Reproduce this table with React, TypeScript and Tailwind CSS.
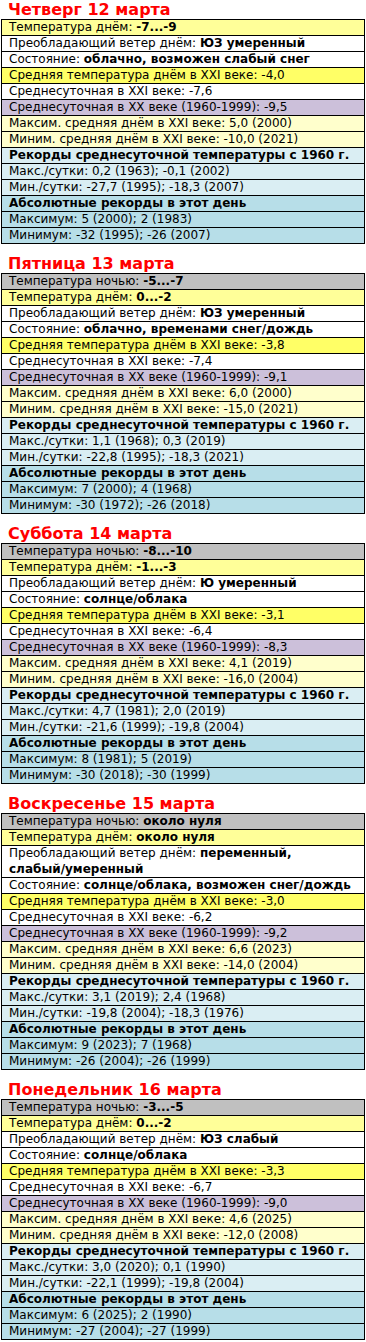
import React from "react";

type Day = {
  title: string;
  night?: string;
  day: string;
  wind: string;
  windWrap?: [string, string];
  state: string;
  avg: string;
  sut21: string;
  sut20: string;
  max: string;
  min: string;
  maxS: string;
  minS: string;
  absMax: string;
  absMin: string;
};

const days: Day[] = [
  {
    title: "Четверг 12 марта",
    day: "-7...-9",
    wind: "ЮЗ умеренный",
    state: "облачно, возможен слабый снег",
    avg: "-4,0",
    sut21: "-7,6",
    sut20: "-9,5",
    max: "5,0 (2000)",
    min: "-10,0 (2021)",
    maxS: "0,2 (1963); -0,1 (2002)",
    minS: "-27,7 (1995); -18,3 (2007)",
    absMax: "5 (2000); 2 (1983)",
    absMin: "-32 (1995); -26 (2007)",
  },
  {
    title: "Пятница 13 марта",
    night: "-5...-7",
    day: "0...-2",
    wind: "ЮЗ умеренный",
    state: "облачно, временами снег/дождь",
    avg: "-3,8",
    sut21: "-7,4",
    sut20: "-9,1",
    max: "6,0 (2000)",
    min: "-15,0 (2021)",
    maxS: "1,1 (1968); 0,3 (2019)",
    minS: "-22,8 (1995); -18,3 (2021)",
    absMax: "7 (2000); 4 (1968)",
    absMin: "-30 (1972); -26 (2018)",
  },
  {
    title: "Суббота 14 марта",
    night: "-8...-10",
    day: "-1...-3",
    wind: "Ю умеренный",
    state: "солнце/облака",
    avg: "-3,1",
    sut21: "-6,4",
    sut20: "-8,3",
    max: "4,1 (2019)",
    min: "-16,0 (2004)",
    maxS: "4,7 (1981); 2,0 (2019)",
    minS: "-21,6 (1999); -19,8 (2004)",
    absMax: "8 (1981); 5 (2019)",
    absMin: "-30 (2018); -30 (1999)",
  },
  {
    title: "Воскресенье 15 марта",
    night: "около нуля",
    day: "около нуля",
    wind: "",
    windWrap: ["переменный,", "слабый/умеренный"],
    state: "солнце/облака, возможен снег/дождь",
    avg: "-3,0",
    sut21: "-6,2",
    sut20: "-9,2",
    max: "6,6 (2023)",
    min: "-14,0 (2004)",
    maxS: "3,1 (2019); 2,4 (1968)",
    minS: "-19,8 (2004); -18,3 (1976)",
    absMax: "9 (2023); 7 (1968)",
    absMin: "-26 (2004); -26 (1999)",
  },
  {
    title: "Понедельник 16 марта",
    night: "-3...-5",
    day: "0...-2",
    wind: "ЮЗ слабый",
    state: "солнце/облака",
    avg: "-3,3",
    sut21: "-6,7",
    sut20: "-9,0",
    max: "4,6 (2025)",
    min: "-12,0 (2008)",
    maxS: "3,0 (2020); 0,1 (1990)",
    minS: "-22,1 (1999); -19,8 (2004)",
    absMax: "6 (2025); 2 (1990)",
    absMin: "-27 (2004); -27 (1999)",
  },
];

function Cell({
  bg,
  children,
  first,
  tall,
}: {
  bg: string;
  children: React.ReactNode;
  first?: boolean;
  tall?: boolean;
}) {
  return (
    <div
      className={
        bg +
        " pl-[7px] whitespace-nowrap overflow-hidden " +
        (tall ? "leading-[15.5px]" : "leading-[15px]") +
        (first ? "" : " border-t border-black")
      }
    >
      {children}
    </div>
  );
}

function Section({ d, idx }: { d: Day; idx: number }) {
  return (
    <div className={idx === 0 ? "" : "mt-[10px]"}>
      <div className="pl-[7px] text-[16px] leading-[19px] font-bold text-[#ff0000] whitespace-nowrap">
        {d.title}
      </div>
      <div className="border border-black text-[12px] text-black">
        {d.night !== undefined && (
          <Cell bg="bg-[#c0c0c0]" first>
            Температура ночью: <b>{d.night}</b>
          </Cell>
        )}
        <Cell bg="bg-[#ffff99]" first={d.night === undefined}>
          Температура днём: <b>{d.day}</b>
        </Cell>
        {d.windWrap ? (
          <Cell bg="bg-white" tall>
            Преобладающий ветер днём: <b>{d.windWrap[0]}</b>
            <br />
            <b>{d.windWrap[1]}</b>
          </Cell>
        ) : (
          <Cell bg="bg-white">
            Преобладающий ветер днём: <b>{d.wind}</b>
          </Cell>
        )}
        <Cell bg="bg-white">
          Состояние: <b>{d.state}</b>
        </Cell>
        <Cell bg="bg-[#ffff66]">Средняя температура днём в XXI веке: {d.avg}</Cell>
        <Cell bg="bg-white">Среднесуточная в XXI веке: {d.sut21}</Cell>
        <Cell bg="bg-[#ccc0da]">Среднесуточная в XX веке (1960-1999): {d.sut20}</Cell>
        <Cell bg="bg-[#ffffcc]">Максим. средняя днём в XXI веке: {d.max}</Cell>
        <Cell bg="bg-[#ffffcc]">Миним. средняя днём в XXI веке: {d.min}</Cell>
        <Cell bg="bg-[#daeef3]">
          <b>Рекорды среднесуточной температуры с 1960 г.</b>
        </Cell>
        <Cell bg="bg-[#daeef3]">Макс./сутки: {d.maxS}</Cell>
        <Cell bg="bg-[#daeef3]">Мин./сутки: {d.minS}</Cell>
        <Cell bg="bg-[#b7dee8]">
          <b>Абсолютные рекорды в этот день</b>
        </Cell>
        <Cell bg="bg-[#b7dee8]">Максимум: {d.absMax}</Cell>
        <Cell bg="bg-[#b7dee8]">Минимум: {d.absMin}</Cell>
      </div>
    </div>
  );
}

export default function App() {
  return (
    <div className="w-[366px] px-[1px] pb-[2px] bg-white font-['DejaVu_Sans',Verdana,sans-serif]">
      {days.map((d, i) => (
        <Section key={i} d={d} idx={i} />
      ))}
    </div>
  );
}
